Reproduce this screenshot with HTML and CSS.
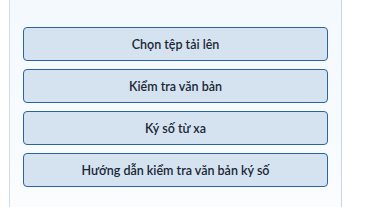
FILE: index.html
```html
<!doctype html>
<html lang="vi">
  <head>
    <meta charset="utf-8">
    <title>Ký số</title>
    <link rel="stylesheet" href="styles.css">
  </head>
  <body>
    <div class="panel">
      <div class="actions">
        <button class="btn">Chọn tệp tải lên</button>
        <button class="btn">Kiểm tra văn bản</button>
        <button class="btn">Ký số từ xa</button>
        <button class="btn">Hướng dẫn kiểm tra văn bản ký số</button>
      </div>
    </div>
  </body>
</html>
```
FILE: styles.css
```css
body {
  margin: 0;
  background-color: #fff;
  font-family: Lato, "Noto Sans", sans-serif;
}
.panel {
  width: 333px;
  height: 207px;
  margin-left: 9px;
  padding: 27px 13px 0;
  box-sizing: border-box;
  border-left: 1px solid #cfdde9;
  border-right: 1px solid #c6d6e5;
  background: linear-gradient(#f4f9fe, #fafcfe);
}
.actions {
  display: flex;
  flex-direction: column;
  gap: 8px;
}
.btn {
  height: 34px;
  padding: 0;
  border: 1px solid #2a64a6;
  border-radius: 4px;
  background-color: #d5e3f0;
  color: #1b2634;
  font-family: inherit;
  font-size: 12.5px;
  font-weight: 600;
}
```
